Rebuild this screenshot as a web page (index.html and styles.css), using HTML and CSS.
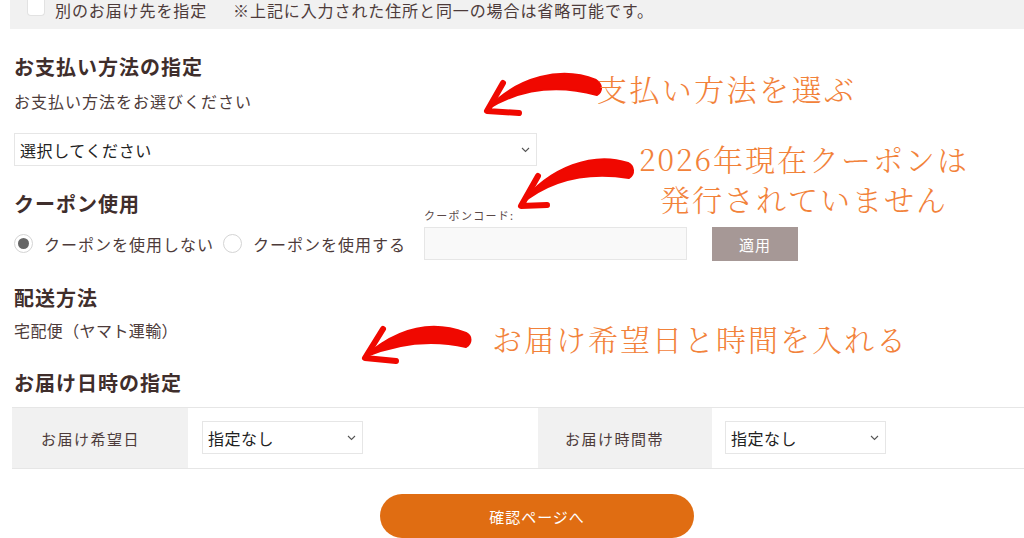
FILE: index.html
```html
<!DOCTYPE html>
<html lang="ja">
<head>
<meta charset="utf-8">
<title>注文手続き</title>
<link rel="stylesheet" href="styles.css">
</head>
<body>
<div class="page">
  <div class="topbar">
    <span class="checkbox"></span>
    <span class="topbar-label">別のお届け先を指定</span>
    <span class="topbar-note">※上記に入力された住所と同一の場合は省略可能です。</span>
  </div>

  <div class="content">
    <section class="block">
      <h2 class="heading">お支払い方法の指定</h2>
      <p class="desc">お支払い方法をお選びください</p>
      <div class="select select-wide">
        <span>選択してください</span>
        <svg class="chev" width="9" height="6" viewBox="0 0 9 6"><path d="M1 1 L4.5 4.5 L8 1" fill="none" stroke="#555" stroke-width="1.1"/></svg>
      </div>
    </section>

    <section class="coupon">
      <div class="coupon-left">
        <h2 class="heading">クーポン使用</h2>
        <div class="radios">
          <span class="radio checked"></span>
          <span class="radio-label">クーポンを使用しない</span>
          <span class="radio"></span>
          <span class="radio-label">クーポンを使用する</span>
        </div>
      </div>
      <div class="coupon-code">
        <label class="code-label">クーポンコード:</label>
        <div class="code-input"></div>
      </div>
      <div class="apply">適用</div>
    </section>

    <section class="block ship">
      <h2 class="heading">配送方法</h2>
      <p class="desc">宅配便（ヤマト運輸）</p>
    </section>

    <section class="block date">
      <h2 class="heading">お届け日時の指定</h2>
    </section>
  </div>

  <div class="dtable">
    <div class="th th1">お届け希望日</div>
    <div class="td td1">
      <div class="select select-small">
        <span>指定なし</span>
        <svg class="chev" width="9" height="6" viewBox="0 0 9 6"><path d="M1 1 L4.5 4.5 L8 1" fill="none" stroke="#555" stroke-width="1.1"/></svg>
      </div>
    </div>
    <div class="th th2">お届け時間帯</div>
    <div class="td td2">
      <div class="select select-small">
        <span>指定なし</span>
        <svg class="chev" width="9" height="6" viewBox="0 0 9 6"><path d="M1 1 L4.5 4.5 L8 1" fill="none" stroke="#555" stroke-width="1.1"/></svg>
      </div>
    </div>
  </div>

  <div class="submit-row">
    <div class="submit">確認ページへ</div>
  </div>

  <svg class="arrows" width="1024" height="538" viewBox="0 0 1024 538">
    <g fill="#f00800" stroke="#f00800" stroke-linecap="round" stroke-linejoin="round">
      <path stroke-width="2" d="M596 80 C562 66 518 76 486 110 C522 87 560 85 597 95 C603 91 602 84 596 80 Z"/>
      <path fill="none" stroke-width="6" d="M503 83 L487 111 L519 113"/>
      <path stroke-width="2" d="M628 163 C594 152 550 166 520 205 C553 177 590 172 629 178 C635 174 634 166 628 163 Z"/>
      <path fill="none" stroke-width="6" d="M538 176 L521 206 L547 205"/>
      <path stroke-width="2" d="M466 333 C430 319 395 330 364 357 C398 343 432 339 466 347 C472 343 472 336 466 333 Z"/>
      <path fill="none" stroke-width="6" d="M383 329 L365 358 L396 361"/>
    </g>
  </svg>

  <div class="note note1">支払い方法を選ぶ</div>
  <div class="note note2">2026年現在クーポンは<br>発行されていません</div>
  <div class="note note3">お届け希望日と時間を入れる</div>
</div>
</body>
</html>
```

FILE: styles.css
```css
* { box-sizing: border-box; }
html, body { margin: 0; padding: 0; background: #fff; }
body {
  font-family: "Noto Sans CJK JP", "Noto Sans", sans-serif;
  color: #4d3b3a;
  width: 1024px;
  height: 538px;
  overflow: hidden;
}
.page { position: relative; width: 1024px; height: 538px; }

.topbar {
  margin-left: 10px;
  height: 29px;
  background: #f1f1f1;
  display: flex;
  align-items: flex-start;
  font-size: 16px;
  line-height: 21px;
  letter-spacing: 0.9px;
}
.checkbox {
  width: 18px;
  height: 16px;
  margin-left: 17px;
  background: #fff;
  border: 1px solid #e2e2e2;
  border-top: none;
  border-radius: 0 0 4px 4px;
}
.topbar-label { margin-left: 10px; }
.topbar-note { margin-left: 26px; }

.content { padding: 0 0 0 14px; }
.heading {
  margin: 0;
  font-size: 20px;
  line-height: 24px;
  font-weight: 700;
  letter-spacing: 1px;
  color: #3f2e2c;
}
.desc {
  margin: 12px 0 0;
  font-size: 16px;
  line-height: 20px;
  letter-spacing: 1px;
}
.block:first-child { padding-top: 26px; }

.select {
  display: flex;
  align-items: center;
  justify-content: space-between;
  border: 1px solid #e6e6e6;
  background: #fff;
  color: #222;
  height: 33px;
}
.select-wide {
  width: 523px;
  margin-top: 22px;
  padding: 0 6px 0 5px;
  font-size: 16px;
  letter-spacing: 0.6px;
}
.select-small {
  width: 161px;
  padding: 0 6px 0 5px;
  font-size: 16px;
  letter-spacing: 0.5px;
}

.coupon {
  display: flex;
  align-items: flex-end;
  margin-top: 26px;
}
.coupon-left { width: 410px; }
.radios {
  display: flex;
  align-items: center;
  height: 33px;
  margin-top: 11px;
  font-size: 16px;
  letter-spacing: 1px;
}
.radio {
  width: 19px;
  height: 19px;
  border: 1px solid #d4d4d4;
  border-radius: 50%;
  background: #fff;
  display: flex;
  align-items: center;
  justify-content: center;
}
.radio.checked::after {
  content: "";
  width: 11px;
  height: 11px;
  border-radius: 50%;
  background: #666;
}
.radio-label { margin-left: 11px; margin-right: 9px; }

.coupon-code { display: flex; flex-direction: column; }
.code-label {
  font-size: 11px;
  line-height: 14px;
  letter-spacing: 1.3px;
  color: #5a4848;
}
.code-input {
  width: 263px;
  height: 33px;
  margin-top: 5px;
  background: #f9f9f9;
  border: 1px solid #e6e6e6;
}
.apply {
  width: 86px;
  height: 34px;
  margin-left: 25px;
  margin-bottom: -1px;
  background: #a69896;
  color: #fff;
  font-size: 15px;
  display: flex;
  align-items: center;
  justify-content: center;
  letter-spacing: 1px;
}

.ship { margin-top: 26px; }
.ship .desc { margin-top: 10px; letter-spacing: 0.4px; }
.date { margin-top: 31px; }

.dtable {
  margin: 12px 0 0 12px;
  display: flex;
  height: 62px;
  border-top: 1px solid #e6e6e6;
  border-bottom: 1px solid #e6e6e6;
}
.th {
  background: #f1f1f1;
  display: flex;
  align-items: center;
  padding-left: 29px;
  font-size: 15px;
  letter-spacing: 1.5px;
}
.th1 { width: 176px; }
.th2 { width: 174px; padding-left: 27px; }
.td { padding: 13px 0 0 14px; }
.td1 { width: 350px; }
.td2 { flex: 1; padding-left: 13px; }

.submit-row {
  display: flex;
  justify-content: center;
  padding-left: 50px;
  margin-top: 25px;
}
.submit {
  width: 314px;
  height: 44px;
  border-radius: 22px;
  background: #e06d12;
  color: #fff;
  font-size: 15px;
  letter-spacing: 1px;
  display: flex;
  align-items: center;
  justify-content: center;
}

.arrows { position: absolute; left: 0; top: 0; pointer-events: none; }

.note {
  position: absolute;
  font-family: "Noto Serif CJK JP", "Noto Sans CJK JP", serif;
  font-weight: 300;
  color: #f2823a;
  font-size: 30px;
  line-height: 40px;
  letter-spacing: 2.4px;
  white-space: nowrap;
}
.note1 { left: 597px; top: 68px; }
.note2 { left: 604px; top: 138px; width: 400px; text-align: center; letter-spacing: 2px; }
.note3 { left: 492px; top: 318px; letter-spacing: 2px; }
```
